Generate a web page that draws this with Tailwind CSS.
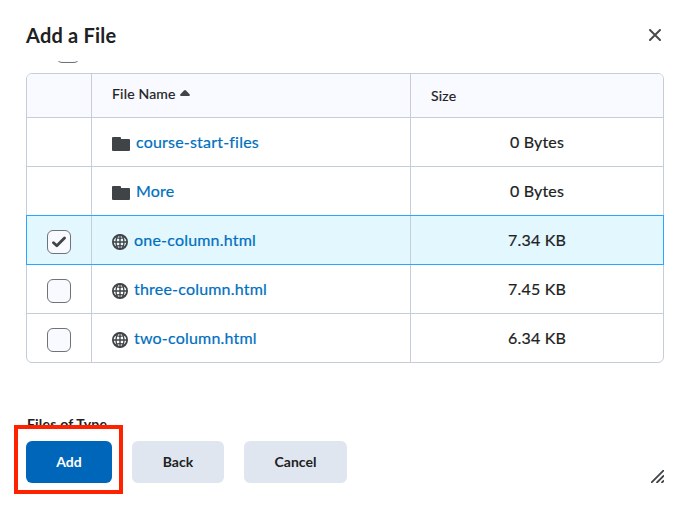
<!DOCTYPE html>
<html lang="en">
<head>
<meta charset="utf-8">
<title>Add a File</title>
<script src="https://cdn.jsdelivr.net/npm/@tailwindcss/browser@4"></script>
</head>
<body class="bg-white">
<svg class="hidden">
  <symbol id="folder" viewBox="0 0 18 14"><path d="M0 1Q0 0 1 0H8Q9 0 9 1V2H17Q18 2 18 3V13Q18 14 17 14H1Q0 14 0 13Z" fill="#404447"/></symbol>
  <symbol id="globe" viewBox="0 0 16 16"><g fill="none" stroke="#404447"><circle cx="8" cy="8" r="7.100" stroke-width="1.800"/><ellipse cx="8" cy="8" rx="4" ry="7.100" stroke-width="1.300"/><path d="M8 1V15M1 8H15" stroke-width="1.400"/><path d="M3 3.600Q8 5.200 13 3.600M3 12.400Q8 10.800 13 12.400" stroke-width="1.100"/></g></symbol>
</svg>
<div class="flex h-[510px] w-[693px] flex-col overflow-hidden bg-white font-['Lato','Liberation_Sans',sans-serif] text-[#202122]">
  <header class="flex h-[61px] shrink-0 justify-between pl-[26px] pr-[32px] pt-5">
    <h2 class="text-[20px] leading-[30px] font-bold tracking-[0.2px]">Add a File</h2>
    <svg class="mt-[9px] h-[12px] w-[12px]" viewBox="0 0 12 12"><path d="M1 1L11 11M11 1L1 11" stroke="#494c4e" stroke-width="2" stroke-linecap="round"/></svg>
  </header>

  <main class="h-[365px] shrink-0 overflow-hidden px-[26px]">
    <div class="flex h-3 items-start pl-[30px]"><div class="-mt-[22px] h-6 w-6 rounded-md border border-[#6e7376] bg-[#f9faff]"></div></div>
    <div class="h-[290px] w-[638px] rounded-md border border-[#c4ced8] text-[16px] leading-6 tracking-[0.2px] [-webkit-text-stroke:0.2px]">
      <div class="grid h-[43px] grid-cols-[65px_319px_252px] rounded-t-[5px] bg-[#f9faff] text-[14px] leading-5">
        <div class="border-r border-[#c4ced8]"></div>
        <div class="flex border-r border-[#c4ced8] pl-5 pt-[10px]"><span>File Name</span><svg class="ml-1 mt-[6px] h-[6px] w-[10px]" viewBox="0 0 10 6"><path d="M5 0Q5.500 0 6 .5L9.600 4.300Q10.300 6 9 6H1Q-.3 6 .4 4.300L4 .5Q4.500 0 5 0Z" fill="#404447"/></svg></div>
        <div class="pl-5 pt-[12px]">Size</div>
      </div>
      <div class="grid h-[49px] grid-cols-[65px_319px_252px] border-t border-[#c4ced8]">
        <div class="border-r border-[#c4ced8]"></div>
        <div class="flex border-r border-[#c4ced8] pl-5 pt-3 text-[#006fbf]"><svg class="mr-[6px] mt-[7px] h-[14px] w-[18px]"><use href="#folder"/></svg><span>course-start-files</span></div>
        <div class="pt-3 text-center">0 Bytes</div>
      </div>
      <div class="grid h-[49px] grid-cols-[65px_319px_252px] border-t border-[#c4ced8]">
        <div class="border-r border-[#c4ced8]"></div>
        <div class="flex border-r border-[#c4ced8] pl-5 pt-3 text-[#006fbf]"><svg class="mr-[6px] mt-[7px] h-[14px] w-[18px]"><use href="#folder"/></svg><span>More</span></div>
        <div class="pt-3 text-center">0 Bytes</div>
      </div>
      <div class="relative -mx-px -mb-px grid h-[50px] grid-cols-[65px_319px_252px] border border-[#29a6ff] bg-[#e3f7ff]">
        <div class="border-r border-[#c4ced8] pl-5 pt-[14px]"><div class="flex h-6 w-6 items-center justify-center rounded-md border border-[#6e7376] bg-[#f9faff]"><svg class="h-[12px] w-[14px]" viewBox="0 0 14 12"><path d="M1.500 6.800L4.800 9.800L12.500 2" fill="none" stroke="#404447" stroke-width="2.800" stroke-linecap="round" stroke-linejoin="round"/></svg></div></div>
        <div class="flex border-r border-[#c4ced8] pl-5 pt-3 text-[#006fbf]"><svg class="mr-[6px] mt-[6px] h-4 w-4"><use href="#globe"/></svg><span>one-column.html</span></div>
        <div class="pt-3 text-center">7.34 KB</div>
      </div>
      <div class="grid h-[49px] grid-cols-[65px_319px_252px] border-t border-transparent">
        <div class="border-r border-[#c4ced8] pl-5 pt-[14px]"><div class="h-6 w-6 rounded-md border border-[#6e7376] bg-[#f9faff]"></div></div>
        <div class="flex border-r border-[#c4ced8] pl-5 pt-3 text-[#006fbf]"><svg class="mr-[6px] mt-[6px] h-4 w-4"><use href="#globe"/></svg><span>three-column.html</span></div>
        <div class="pt-3 text-center">7.45 KB</div>
      </div>
      <div class="grid h-[49px] grid-cols-[65px_319px_252px] border-t border-[#c4ced8]">
        <div class="border-r border-[#c4ced8] pl-5 pt-[14px]"><div class="h-6 w-6 rounded-md border border-[#6e7376] bg-[#f9faff]"></div></div>
        <div class="flex border-r border-[#c4ced8] pl-5 pt-3 text-[#006fbf]"><svg class="mr-[6px] mt-[6px] h-4 w-4"><use href="#globe"/></svg><span>two-column.html</span></div>
        <div class="pt-3 text-center">6.34 KB</div>
      </div>
    </div>
    <div class="mt-[51px] pl-px text-[14px] leading-5 font-bold tracking-[0.2px]">Files of Type</div>
  </main>

  <footer class="relative flex grow items-start pl-[26px] pt-[15px] text-[14px] leading-5 font-bold">
    <button class="h-[42px] w-[86px] rounded-md bg-[#0066b9] text-white">Add</button>
    <button class="ml-5 h-[42px] w-[92px] rounded-md bg-[#dfe6ef]">Back</button>
    <button class="ml-5 h-[42px] w-[103px] rounded-md bg-[#dfe6ef]">Cancel</button>
    <svg class="mt-[29px] ml-[304px] h-[13px] w-[13px]" viewBox="0 0 13 13"><path d="M0 13L13 0M5.500 13L13 5.500M10.500 13L13 10.500" stroke="#404447" stroke-width="1.800" fill="none"/></svg>
    <div class="pointer-events-none absolute -top-px left-[14px] h-[69px] w-[109px] border-4 border-[#ff2200]"></div>
  </footer>
</div>
</body>
</html>
